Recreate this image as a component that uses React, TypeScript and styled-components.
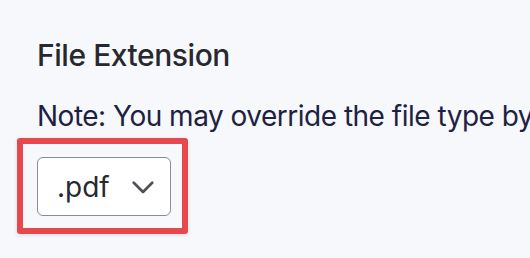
import styled, { createGlobalStyle } from 'styled-components'

const GlobalStyle = createGlobalStyle`
  html, body {
    margin: 0;
    padding: 0;
    background: #f7f8fc;
    overflow: hidden;
  }
  body {
    font-family: Inter, "Noto Sans", "Liberation Sans", sans-serif;
    -webkit-font-smoothing: antialiased;
  }
`

const App = () => {
  return (
    <Page>
      <GlobalStyle />
      <Section>
        <Heading>File Extension</Heading>
        <Note>Note: You may override the file type by selecting a different extension below.</Note>
        <Highlight>
          <Select>
            <Value>.pdf</Value>
            <Chevron width="22" height="13" viewBox="0 0 22 13">
              <path d="M1.8 1.8 L11 11 L20.2 1.8" fill="none" stroke="#4f5157" strokeWidth="2.7" strokeLinecap="round" strokeLinejoin="round" />
            </Chevron>
          </Select>
        </Highlight>
      </Section>
    </Page>
  )
}

export default App

const Page = styled.div`
  width: 530px;
  height: 258px;
  background: #f7f8fc;
  overflow: hidden;
`

const Section = styled.div`
  display: flex;
  flex-direction: column;
  align-items: flex-start;
  padding: 37px 0 0 37px;
`

const Heading = styled.div`
  font-size: 30px;
  line-height: 36px;
  font-weight: 500;
  letter-spacing: -0.45px;
  color: #27292f;
  white-space: nowrap;
`

const Note = styled.div`
  margin-top: 26px;
  font-size: 28px;
  line-height: 34px;
  font-weight: 400;
  letter-spacing: -0.5px;
  color: #1d2243;
  white-space: nowrap;
`

const Highlight = styled.div`
  margin: 5px 0 0 -20px;
  display: inline-flex;
  padding: 13px 11px 12px 14px;
  border: 6px solid #e5494e;
  border-radius: 3px;
  box-shadow: 0 1px 4px rgba(0, 0, 0, 0.12);
`

const Select = styled.div`
  box-sizing: border-box;
  width: 134px;
  height: 59px;
  display: flex;
  align-items: center;
  justify-content: space-between;
  padding: 0 16px 0 19px;
  background: #ffffff;
  border: 1.5px solid #8b8c90;
  border-radius: 6px;
`

const Value = styled.span`
  font-size: 28px;
  line-height: 34px;
  color: #27292f;
`

const Chevron = styled.svg`
  display: block;
  margin-top: 2px;
`
